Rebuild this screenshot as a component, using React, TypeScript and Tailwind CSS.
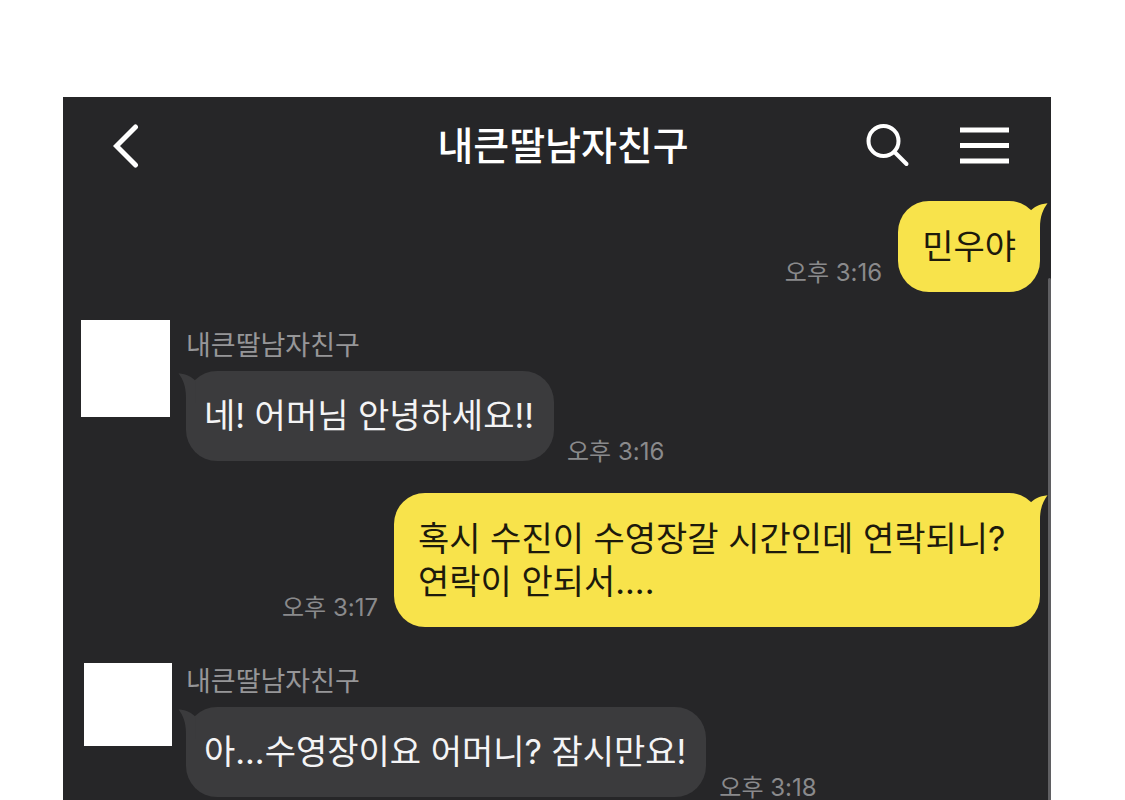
import React from "react";

type Message = {
  id: number;
  mine: boolean;
  text: string;
  time: string;
  rowClass: string;
  avatarClass?: string;
  bodyClass?: string;
};

const CONTACT = "내큰딸남자친구";

const MESSAGES: Message[] = [
  { id: 1, mine: true, text: "민우야", time: "오후 3:16", rowClass: "mt-[6px]" },
  {
    id: 2,
    mine: false,
    text: "네! 어머님 안녕하세요!!",
    time: "오후 3:16",
    rowClass: "mt-7",
    avatarClass: "ml-[18px] h-[97px] w-[89px]",
    bodyClass: "pt-[11px]",
  },
  {
    id: 3,
    mine: true,
    text: "혹시 수진이 수영장갈 시간인데 연락되니? 연락이 안되서....",
    time: "오후 3:17",
    rowClass: "mt-8",
  },
  {
    id: 4,
    mine: false,
    text: "아...수영장이요 어머니? 잠시만요!",
    time: "오후 3:18",
    rowClass: "mt-9",
    avatarClass: "ml-[21px] h-[83px] w-[88px]",
    bodyClass: "pt-1",
  },
];

function Tail({ className }: { className: string }) {
  return (
    <svg className={className} width="20" height="32" viewBox="0 0 20 32" aria-hidden="true">
      <path d="M2.5 9.8C6 6 11 3 19.5 2.2C15 8.5 12 15 12 27V32H2.5Z" fill="currentColor" />
    </svg>
  );
}

function Time({ value, className }: { value: string; className: string }) {
  return (
    <time className={`shrink-0 text-[24px] leading-[18px] whitespace-nowrap text-[#8a8a8c] ${className}`}>
      {value}
    </time>
  );
}

function Outgoing({ message }: { message: Message }) {
  return (
    <li className={`flex items-end justify-end gap-4 pr-[11px] ${message.rowClass}`}>
      <Time value={message.time} className="mb-[10px]" />
      <div className="relative max-w-[646px] rounded-[31px] bg-[#f8e34b] px-6 py-6 text-[#f8e34b]">
        <p className="text-[34px] leading-[43px] break-keep text-[#1d1a0c]">{message.text}</p>
        <Tail className="absolute top-0 -right-2" />
      </div>
    </li>
  );
}

function Incoming({ message }: { message: Message }) {
  return (
    <li className={`flex items-start ${message.rowClass}`}>
      <div className="w-[123px] shrink-0">
        <div className={`bg-white ${message.avatarClass}`} />
      </div>
      <div className={message.bodyClass}>
        <h2 className="text-[27px] leading-[30px] text-[#969698]">{CONTACT}</h2>
        <div className="mt-[10px] flex items-end gap-[13px]">
          <div className="relative rounded-[31px] bg-[#3b3b3d] pt-[23px] pr-5 pb-6 pl-[18px] text-[#3b3b3d]">
            <p className="text-[34px] leading-[43px] break-keep text-[#f4f4f5]">{message.text}</p>
            <Tail className="absolute top-0 -left-2 -scale-x-100" />
          </div>
          <Time value={message.time} className="" />
        </div>
      </div>
    </li>
  );
}

export default function App() {
  return (
    <div className="flex min-h-screen flex-col bg-white pt-[97px] pr-[74px] pl-[63px] font-['Inter','Noto_Sans_CJK_KR',sans-serif]">
      <main className="relative flex-1 overflow-hidden bg-[#262628]">
        <header className="grid h-[98px] grid-cols-[1fr_auto_1fr] items-center pr-[42px] pl-[50px] text-white">
          <button type="button" aria-label="뒤로" className="justify-self-start">
            <svg width="26" height="44" viewBox="0 0 26 44" fill="none" stroke="currentColor" strokeWidth="5" strokeLinecap="round" strokeLinejoin="miter">
              <path d="M22.5 3L3.5 22L22.5 41" />
            </svg>
          </button>
          <h1 className="pl-1 text-[39px] leading-[48px] font-medium">{CONTACT}</h1>
          <div className="flex items-center gap-[50px] justify-self-end">
            <button type="button" aria-label="검색">
              <svg width="44" height="44" viewBox="0 0 44 44" fill="none" stroke="currentColor" strokeWidth="4" strokeLinecap="round">
                <circle cx="17.5" cy="17" r="15" />
                <path d="M29 28.5L40.5 40" />
              </svg>
            </button>
            <button type="button" aria-label="메뉴">
              <svg width="49" height="38" viewBox="0 0 49 38" fill="currentColor">
                <path d="M0 0.5H49V5.5H0ZM0 16H49V21H0ZM0 31.5H49V36.5H0Z" />
              </svg>
            </button>
          </div>
        </header>
        <ol className="flex flex-col">
          {MESSAGES.map((message) =>
            message.mine ? (
              <Outgoing key={message.id} message={message} />
            ) : (
              <Incoming key={message.id} message={message} />
            ),
          )}
        </ol>
        <div className="absolute top-[181px] right-0 bottom-0 w-[3px] rounded-t-sm bg-[#5f5f62]" />
      </main>
    </div>
  );
}
